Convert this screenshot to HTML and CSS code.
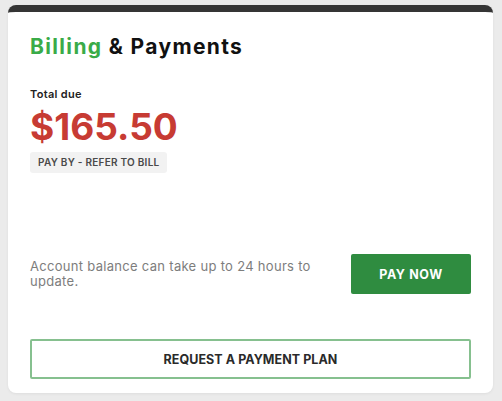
FILE: index.html
```html
<!DOCTYPE html>
<html>
<head>
<meta charset="utf-8">
<link rel="stylesheet" href="styles.css">
</head>
<body>
<div class="card">
  <h1 class="title"><span class="accent">Billing</span> &amp; Payments</h1>
  <div class="label">Total due</div>
  <div class="amount">$165.50</div>
  <div class="pill">PAY BY - REFER TO BILL</div>
  <div class="spacer"></div>
  <div class="pay-row">
    <p class="note">Account balance can take up to 24 hours to update.</p>
    <button class="btn btn-primary">PAY NOW</button>
  </div>
  <button class="btn btn-outline">REQUEST A PAYMENT PLAN</button>
</div>
</body>
</html>
```
FILE: styles.css
```css
html, body {
  margin: 0;
  padding: 0;
}
body {
  background: #ebebeb;
  padding: 5px 9px 8px 8px;
  font-family: "Inter", "Liberation Sans", sans-serif;
}
.card {
  box-sizing: border-box;
  height: 388px;
  background: #fff;
  border-top: 7px solid #353535;
  border-radius: 8px;
  padding: 23px 22px 14px;
  display: flex;
  flex-direction: column;
  align-items: flex-start;
  box-shadow: 0 1px 3px rgba(0, 0, 0, 0.06);
}
.title {
  margin: 0;
  font-size: 21px;
  line-height: 24px;
  font-weight: 700;
  color: #111;
  letter-spacing: 1.35px;
}
.accent {
  color: #3aab48;
}
.label {
  margin-top: 28px;
  font-size: 11px;
  line-height: 14px;
  font-weight: 600;
  letter-spacing: 0.3px;
  color: #222;
}
.amount {
  margin-top: 4px;
  font-size: 37px;
  line-height: 44px;
  font-weight: 700;
  color: #c73b33;
}
.pill {
  margin-top: 3px;
  background: #f2f2f2;
  border-radius: 3px;
  padding: 0 8px;
  line-height: 21px;
  font-size: 10px;
  font-weight: 600;
  letter-spacing: 0.25px;
  color: #4a4a4a;
}
.spacer {
  flex: 1;
}
.pay-row {
  align-self: stretch;
  display: flex;
  align-items: center;
  justify-content: space-between;
}
.note {
  margin: 0;
  width: 300px;
  font-size: 13px;
  line-height: 15px;
  letter-spacing: 0.3px;
  color: #7d7d7d;
}
.btn {
  font-family: inherit;
  cursor: pointer;
  border-radius: 2px;
  font-size: 12.5px;
  font-weight: 700;
  height: 40px;
}
.btn-primary {
  width: 120px;
  background: #2f8c40;
  color: #fff;
  border: none;
  letter-spacing: 0.6px;
}
.btn-outline {
  margin-top: 45px;
  align-self: stretch;
  background: #fff;
  color: #2a2a2a;
  border: 2px solid #86c08f;
  letter-spacing: 0.05px;
}
```
